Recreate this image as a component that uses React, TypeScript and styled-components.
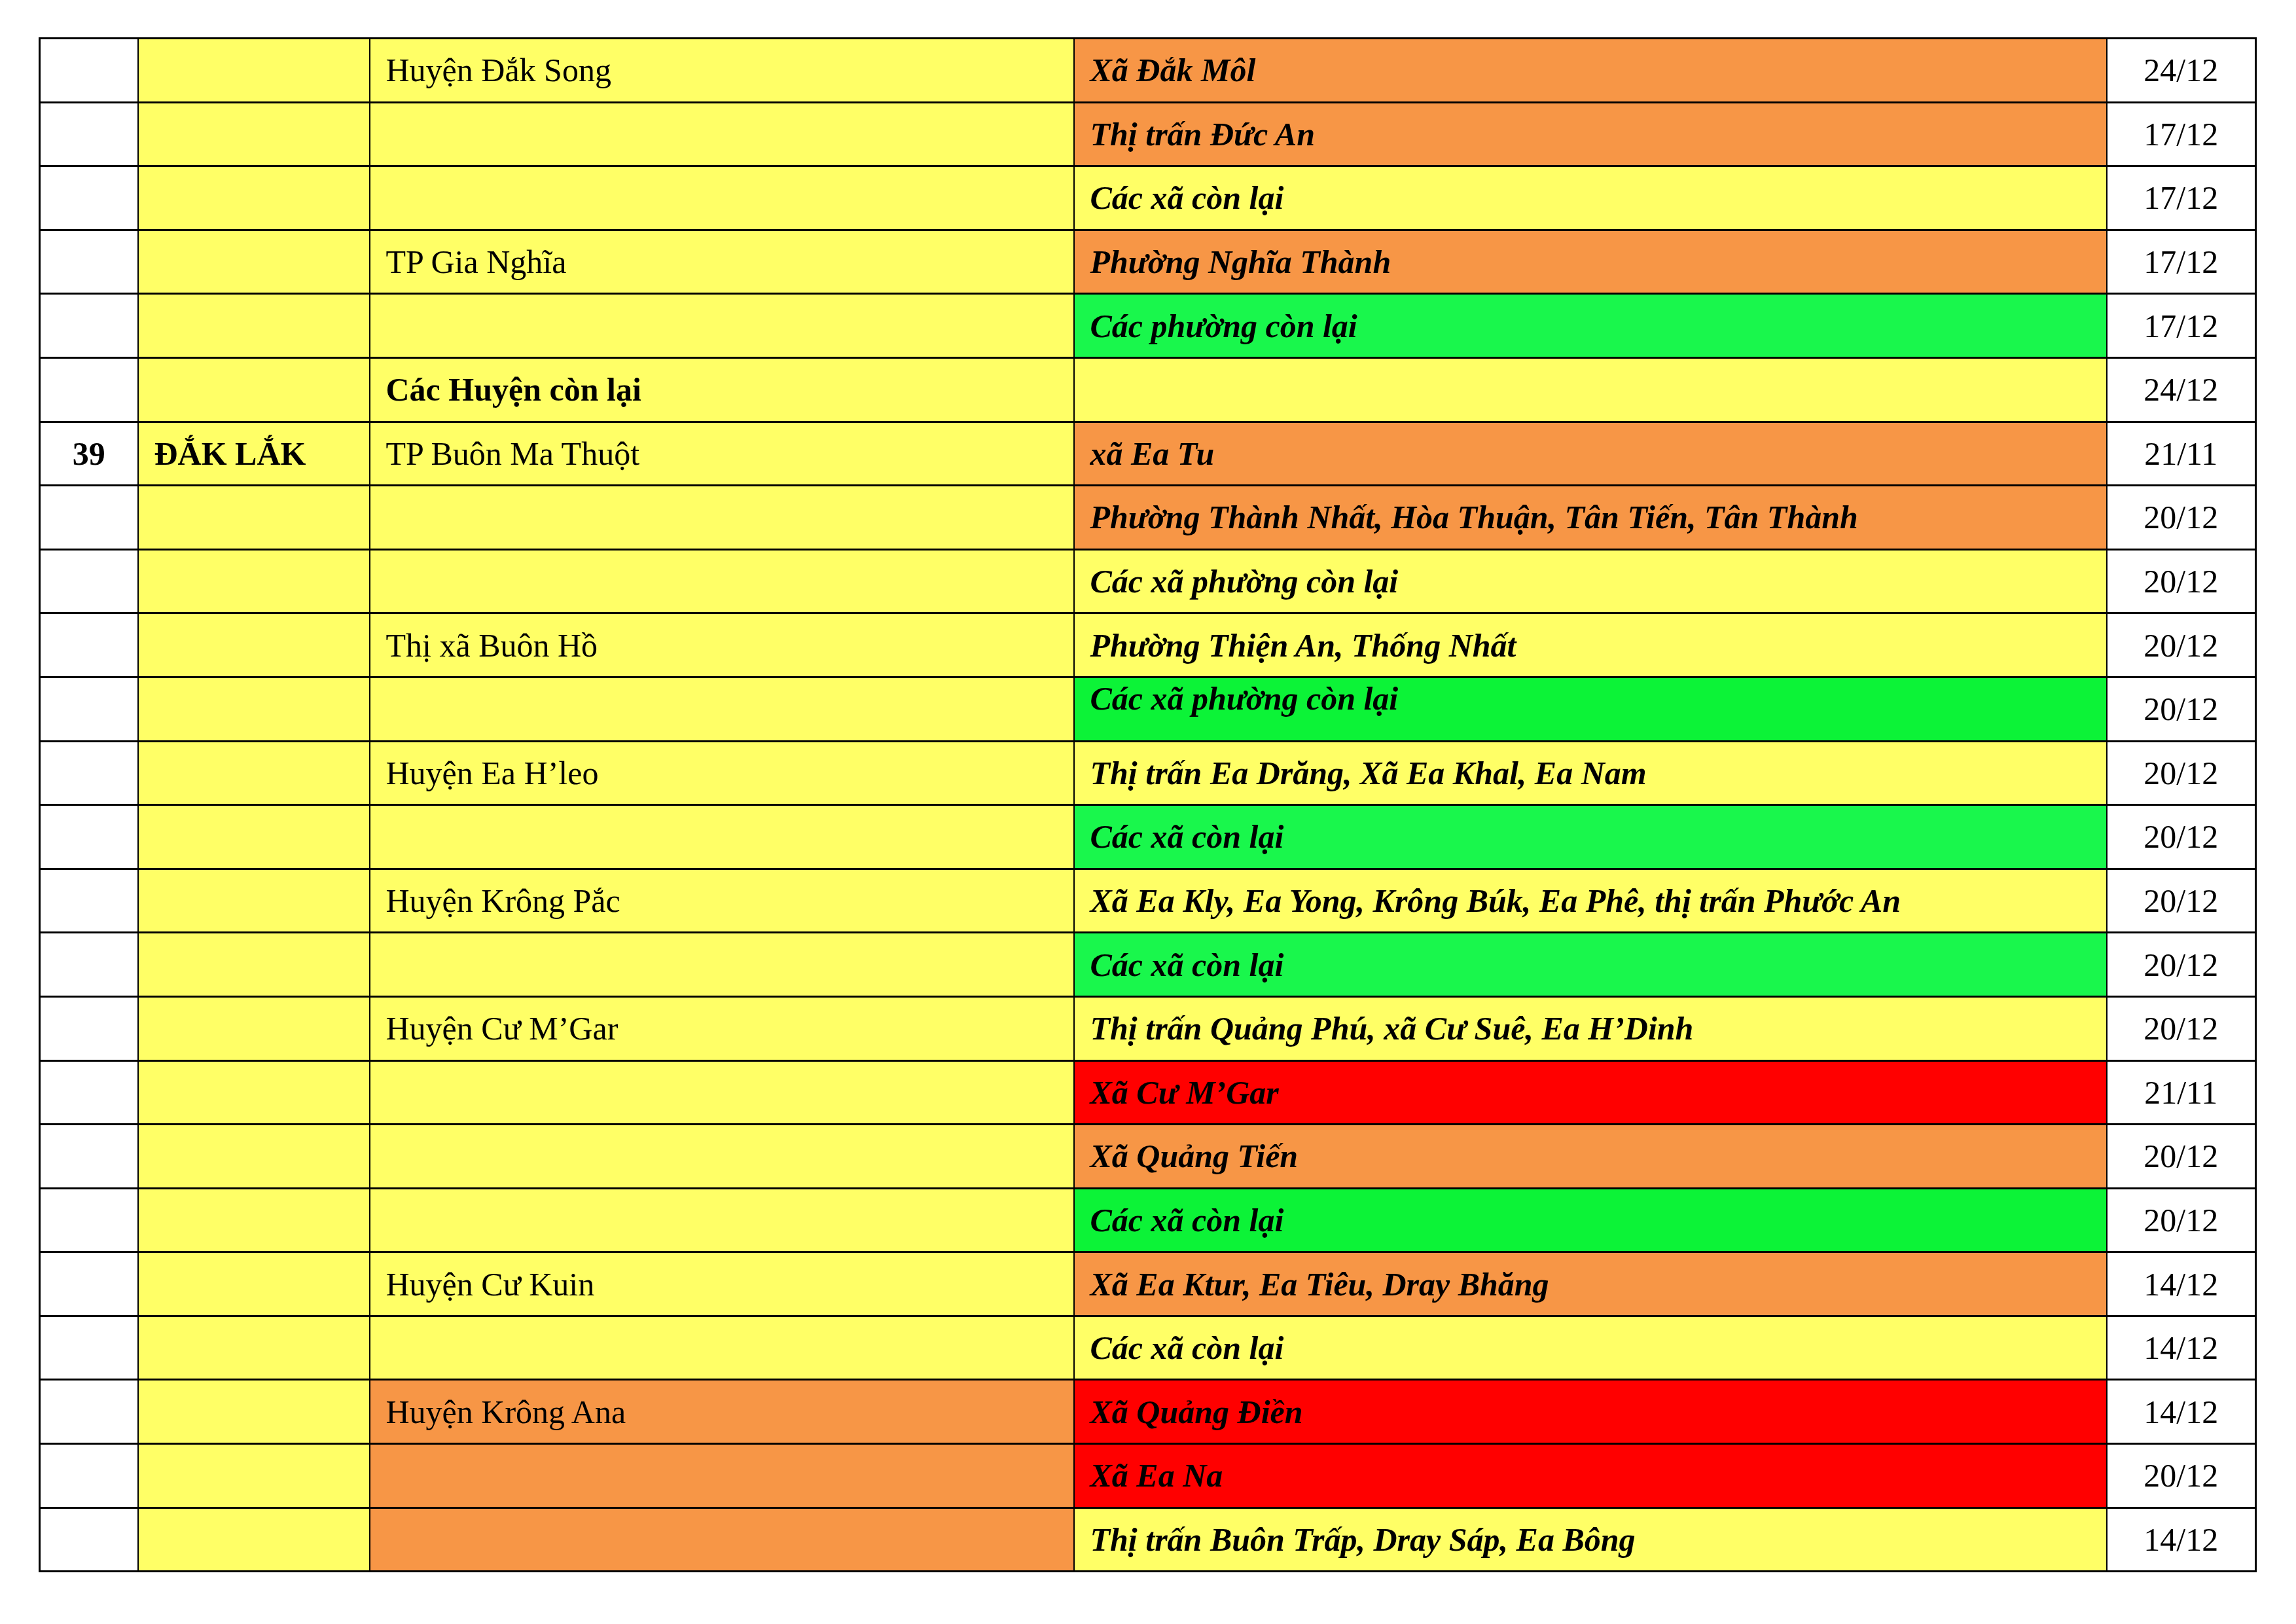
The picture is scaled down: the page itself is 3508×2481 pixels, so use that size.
import React from 'react';
import styled, {createGlobalStyle} from 'styled-components';

const GlobalStyle = createGlobalStyle`
  html, body {
    margin: 0;
    padding: 0;
    background: #fff;
  }
  body {
    font-family: "Liberation Serif", "Times New Roman", serif;
    color: #000;
  }
`

const colors = {
  white: '#ffffff',
  yellow: '#ffff66',
  orange: '#f79646',
  green: '#19f74c',
  greenDark: '#0cf337',
  red: '#ff0000',
}

type Fill = keyof typeof colors;

const Page = styled.div`
  padding: 57px 0 0 59px;
`

const Table = styled.table`
  border-collapse: collapse;
  table-layout: fixed;
  width: 3386px;
  border: 3px solid #000;
  font-family: "Liberation Serif", "Times New Roman", serif;
  font-size: 50px;
`

const Col = styled.col<{$w: number}>`
  width: ${p => p.$w}px;
`

const Row = styled.tr`
  height: 97.6px;
`

const Cell = styled.td<{$fill: Fill; $bold?: boolean; $italic?: boolean; $center?: boolean; $top?: boolean}>`
  background: ${p => colors[p.$fill]};
  border-top: 3px solid #000;
  border-bottom: 3px solid #000;
  border-left: 2px solid #000;
  border-right: 2px solid #000;
  padding: ${p => (p.$top ? '2px 0 0 24px' : p.$center ? '0' : '0 0 0 24px')};
  vertical-align: ${p => (p.$top ? 'top' : 'middle')};
  text-align: ${p => (p.$center ? 'center' : 'left')};
  font-weight: ${p => (p.$bold ? 700 : 400)};
  font-style: ${p => (p.$italic ? 'italic' : 'normal')};
  white-space: nowrap;
  overflow: hidden;
`

type Line = {
  no?: string;
  province?: string;
  district?: string;
  districtBold?: boolean;
  districtFill?: Fill;
  area: string;
  areaFill: Fill;
  areaTop?: boolean;
  date: string;
};

const lines: Line[] = [
  {district: 'Huyện Đắk Song', area: 'Xã Đắk Môl', areaFill: 'orange', date: '24/12'},
  {area: 'Thị trấn Đức An', areaFill: 'orange', date: '17/12'},
  {area: 'Các xã còn lại', areaFill: 'yellow', date: '17/12'},
  {district: 'TP Gia Nghĩa', area: 'Phường Nghĩa Thành', areaFill: 'orange', date: '17/12'},
  {area: 'Các phường còn lại', areaFill: 'green', date: '17/12'},
  {district: 'Các Huyện còn lại', districtBold: true, area: '', areaFill: 'yellow', date: '24/12'},
  {no: '39', province: 'ĐẮK LẮK', district: 'TP Buôn Ma Thuột', area: 'xã Ea Tu', areaFill: 'orange', date: '21/11'},
  {area: 'Phường Thành Nhất, Hòa Thuận, Tân Tiến, Tân Thành', areaFill: 'orange', date: '20/12'},
  {area: 'Các xã phường còn lại', areaFill: 'yellow', date: '20/12'},
  {district: 'Thị xã Buôn Hồ', area: 'Phường Thiện An, Thống Nhất', areaFill: 'yellow', date: '20/12'},
  {area: 'Các xã phường còn lại', areaFill: 'greenDark', areaTop: true, date: '20/12'},
  {district: 'Huyện Ea H’leo', area: 'Thị trấn Ea Drăng, Xã Ea Khal, Ea Nam', areaFill: 'yellow', date: '20/12'},
  {area: 'Các xã còn lại', areaFill: 'green', date: '20/12'},
  {district: 'Huyện Krông Pắc', area: 'Xã Ea Kly, Ea Yong, Krông Búk, Ea Phê, thị trấn Phước An', areaFill: 'yellow', date: '20/12'},
  {area: 'Các xã còn lại', areaFill: 'green', date: '20/12'},
  {district: 'Huyện Cư M’Gar', area: 'Thị trấn Quảng Phú, xã Cư Suê, Ea H’Dinh', areaFill: 'yellow', date: '20/12'},
  {area: 'Xã Cư M’Gar', areaFill: 'red', date: '21/11'},
  {area: 'Xã Quảng Tiến', areaFill: 'orange', date: '20/12'},
  {area: 'Các xã còn lại', areaFill: 'greenDark', date: '20/12'},
  {district: 'Huyện Cư Kuin', area: 'Xã Ea Ktur, Ea Tiêu, Dray Bhăng', areaFill: 'orange', date: '14/12'},
  {area: 'Các xã còn lại', areaFill: 'yellow', date: '14/12'},
  {district: 'Huyện Krông Ana', districtFill: 'orange', area: 'Xã Quảng Điền', areaFill: 'red', date: '14/12'},
  {districtFill: 'orange', area: 'Xã Ea Na', areaFill: 'red', date: '20/12'},
  {districtFill: 'orange', area: 'Thị trấn Buôn Trấp, Dray Sáp, Ea Bông', areaFill: 'yellow', date: '14/12'},
];

function App() {
  return (
    <Page>
      <GlobalStyle/>
      <Table>
        <colgroup>
          <Col $w={150}/>
          <Col $w={354}/>
          <Col $w={1076}/>
          <Col $w={1578}/>
          <Col $w={228}/>
        </colgroup>
        <tbody>
          {lines.map((l, i) => (
            <Row key={i}>
              <Cell $fill="white" $bold $center>{l.no}</Cell>
              <Cell $fill="yellow" $bold>{l.province}</Cell>
              <Cell $fill={l.districtFill || 'yellow'} $bold={l.districtBold}>{l.district}</Cell>
              <Cell $fill={l.areaFill} $bold $italic $top={l.areaTop}>{l.area}</Cell>
              <Cell $fill="white" $center>{l.date}</Cell>
            </Row>
          ))}
        </tbody>
      </Table>
    </Page>
  );
}

export default App;
